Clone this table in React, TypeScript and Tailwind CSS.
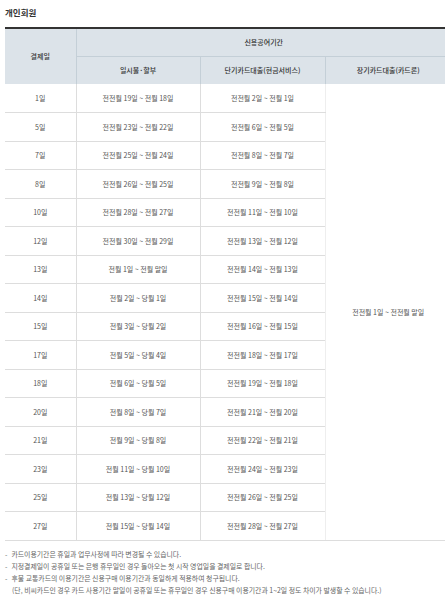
const rows: [string, string, string][] = [
  ["1일", "전전월 19일 ~ 전월 18일", "전전월 2일 ~ 전월 1일"],
  ["5일", "전전월 23일 ~ 전월 22일", "전전월 6일 ~ 전월 5일"],
  ["7일", "전전월 25일 ~ 전월 24일", "전전월 8일 ~ 전월 7일"],
  ["8일", "전전월 26일 ~ 전월 25일", "전전월 9일 ~ 전월 8일"],
  ["10일", "전전월 28일 ~ 전월 27일", "전전월 11일 ~ 전월 10일"],
  ["12일", "전전월 30일 ~ 전월 29일", "전전월 13일 ~ 전월 12일"],
  ["13일", "전월 1일 ~ 전월 말일", "전전월 14일 ~ 전월 13일"],
  ["14일", "전월 2일 ~ 당월 1일", "전전월 15일 ~ 전월 14일"],
  ["15일", "전월 3일 ~ 당월 2일", "전전월 16일 ~ 전월 15일"],
  ["17일", "전월 5일 ~ 당월 4일", "전전월 18일 ~ 전월 17일"],
  ["18일", "전월 6일 ~ 당월 5일", "전전월 19일 ~ 전월 18일"],
  ["20일", "전월 8일 ~ 당월 7일", "전전월 21일 ~ 전월 20일"],
  ["21일", "전월 9일 ~ 당월 8일", "전전월 22일 ~ 전월 21일"],
  ["23일", "전월 11일 ~ 당월 10일", "전전월 24일 ~ 전월 23일"],
  ["25일", "전월 13일 ~ 당월 12일", "전전월 26일 ~ 전월 25일"],
  ["27일", "전월 15일 ~ 당월 14일", "전전월 28일 ~ 전월 27일"],
];

const notes = [
  "카드이용기간은 휴일과 업무사정에 따라 변경될 수 있습니다.",
  "지정결제일이 공휴일 또는 은행 휴무일인 경우 돌아오는 첫 시작 영업일을 결제일로 합니다.",
  "후불 교통카드의 이용기간은 신용구매 이용기간과 동일하게 적용하여 청구됩니다.",
];

export default function App() {
  return (
    <div
      className="w-[445px] overflow-hidden bg-white pt-[7px] pl-[5px] text-[#555]"
      style={{ fontFamily: '"Noto Sans CJK KR", "Noto Sans", sans-serif' }}
    >
      <h2 className="text-[8.5px] font-bold leading-[10px] text-[#333]">개인회원</h2>

      <table className="mt-[10px] w-[446px] table-fixed border-collapse border-t-2 border-t-[#333] text-[7px]">
        <colgroup>
          <col className="w-[71px]" />
          <col className="w-[124px]" />
          <col className="w-[125px]" />
          <col className="w-[126px]" />
        </colgroup>
        <thead className="bg-[#dce3e9] text-[#333]">
          <tr className="h-[28px]">
            <th rowSpan={2} className="border-r border-[#c4cfd7] font-medium">
              결제일
            </th>
            <th colSpan={3} className="border-b border-[#c4cfd7] font-medium">
              신용공여기간
            </th>
          </tr>
          <tr className="h-[28px]">
            <th className="border-r border-[#c4cfd7] font-medium">일시불·할부</th>
            <th className="border-r border-[#c4cfd7] font-medium">단기카드대출(현금서비스)</th>
            <th className="font-medium">장기카드대출(카드론)</th>
          </tr>
        </thead>
        <tbody>
          {rows.map(([day, a, b], i) => (
            <tr key={day} className="h-[28.5px]">
              <td className="border-b border-[#ddd] text-center">{day}</td>
              <td className="border-b border-l border-[#ddd] text-center">{a}</td>
              <td className="border-b border-l border-[#ddd] text-center">{b}</td>
              {i === 0 && (
                <td rowSpan={rows.length} className="border-b border-l border-b-[#ddd] border-l-[#eee] text-center">
                  전전월 1일 ~ 전전월 말일
                </td>
              )}
            </tr>
          ))}
        </tbody>
      </table>

      <ul className="mt-[7px] text-[6.9px] leading-[12.3px] text-[#666]">
        {notes.map((n) => (
          <li key={n} className="flex gap-[4px]">
            <span>-</span>
            <span>{n}</span>
          </li>
        ))}
        <li className="pl-[7px]">
          (단, 비씨카드인 경우 카드 사용기간 말일이 공휴일 또는 휴무일인 경우 신용구매 이용기간과 1~2일 정도 차이가 발생할 수 있습니다.)
        </li>
      </ul>
    </div>
  );
}
